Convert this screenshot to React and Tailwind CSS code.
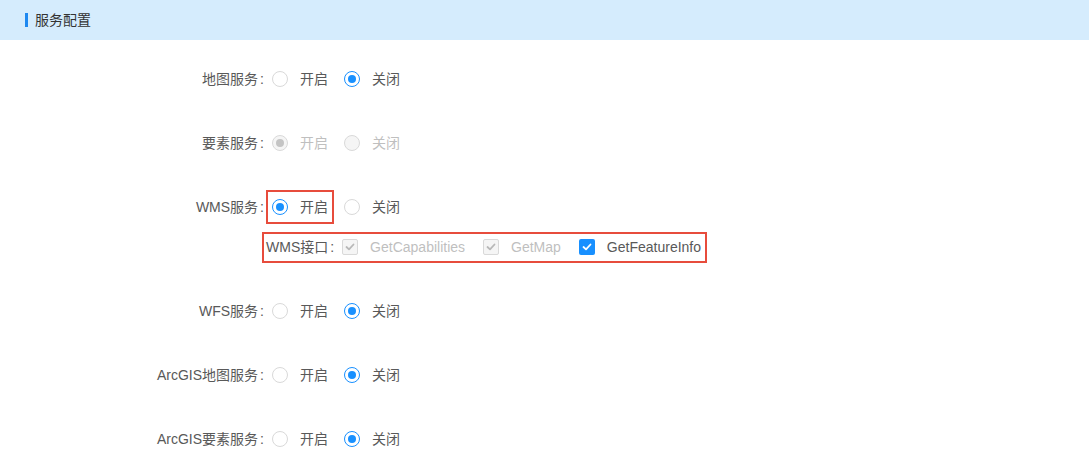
import React from "react";

const services = [
  { label: "地图服务", value: "off" },
  { label: "要素服务", value: "on", disabled: true },
  { label: "WMS服务", value: "on", highlight: true, interfaces: true },
  { label: "WFS服务", value: "off" },
  { label: "ArcGIS地图服务", value: "off" },
  { label: "ArcGIS要素服务", value: "off" },
];

const wmsInterfaces = [
  { name: "GetCapabilities", checked: true, disabled: true },
  { name: "GetMap", checked: true, disabled: true },
  { name: "GetFeatureInfo", checked: true },
];

function Radio({ checked, disabled }) {
  const ring = disabled
    ? "border-[#d9d9d9] bg-[#f5f5f5]"
    : checked
    ? "border-[#1890ff] bg-white"
    : "border-[#d9d9d9] bg-white";
  return (
    <span className={`flex h-4 w-4 items-center justify-center rounded-full border ${ring}`}>
      {checked && (
        <span className={`h-2 w-2 rounded-full ${disabled ? "bg-[#c4c4c4]" : "bg-[#1890ff]"}`} />
      )}
    </span>
  );
}

function RadioItem({ text, checked, disabled }) {
  return (
    <label className="flex items-center">
      <Radio checked={checked} disabled={disabled} />
      <span className={`pl-3 ${disabled ? "text-[#bfbfbf]" : "text-[#595959]"}`}>{text}</span>
    </label>
  );
}

function Checkbox({ checked, disabled }) {
  const box = disabled
    ? "border border-[#d9d9d9] bg-[#f5f5f5]"
    : "bg-[#1890ff]";
  return (
    <span className={`flex h-4 w-4 items-center justify-center rounded-[2px] ${box}`}>
      {checked && (
        <svg width="10" height="8" viewBox="0 0 10 8" fill="none">
          <polyline
            points="1.5,4 4,6.3 8.5,1.5"
            stroke={disabled ? "#b8b8b8" : "#fff"}
            strokeWidth="1.8"
            strokeLinecap="round"
            strokeLinejoin="round"
          />
        </svg>
      )}
    </span>
  );
}

export default function App() {
  return (
    <div
      className="min-h-screen bg-white text-sm"
      style={{ fontFamily: '"Liberation Sans", "Noto Sans CJK SC", sans-serif' }}
    >
      {/* Header */}
      <div className="flex h-10 items-center bg-[#d5ecfd] pl-[25px]">
        <span className="h-[14px] w-[3px] bg-[#1e88f0]" />
        <span className="ml-[7px] text-[#333]">服务配置</span>
      </div>

      {/* Form */}
      <div className="pt-[19px]">
        {services.map((s) => (
          <div key={s.label} className="mb-6">
            <div className="flex h-10 items-center">
              <div className="w-[272px] pr-2 text-right text-[#595959]">
                {s.label}
                <span className="ml-[2px]">:</span>
              </div>
              <div className="flex items-center">
                {s.highlight ? (
                  <div className="-my-2 -ml-[6px] mr-[10px] border-2 border-[#e74c3c] px-1 py-[5px]">
                    <RadioItem text="开启" checked={s.value === "on"} disabled={s.disabled} />
                  </div>
                ) : (
                  <div className="mr-4">
                    <RadioItem text="开启" checked={s.value === "on"} disabled={s.disabled} />
                  </div>
                )}
                <RadioItem text="关闭" checked={s.value === "off"} disabled={s.disabled} />
              </div>
            </div>

            {s.interfaces && (
              <div className="flex h-10 items-center pl-[262px]">
                <div className="flex h-[31px] items-center border-2 border-[#e74c3c] pl-[2px] pr-1">
                  <span className="text-[#595959]">
                    WMS接口<span className="ml-[2px] mr-2">:</span>
                  </span>
                  {wmsInterfaces.map((it, i) => (
                    <label
                      key={it.name}
                      className={`flex items-center ${i < wmsInterfaces.length - 1 ? "mr-[18px]" : ""}`}
                    >
                      <Checkbox checked={it.checked} disabled={it.disabled} />
                      <span className={`pl-3 ${it.disabled ? "text-[#bfbfbf]" : "text-[#595959]"}`}>
                        {it.name}
                      </span>
                    </label>
                  ))}
                </div>
              </div>
            )}
          </div>
        ))}
      </div>
    </div>
  );
}
